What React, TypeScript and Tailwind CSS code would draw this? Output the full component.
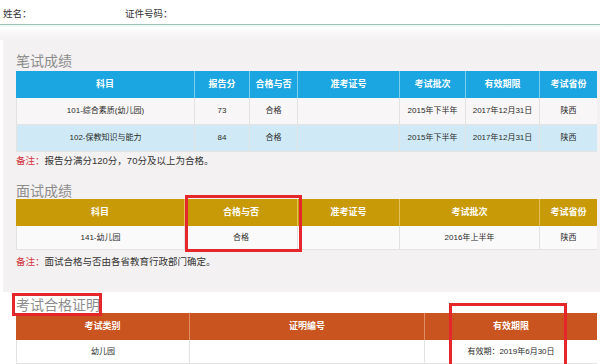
import React from 'react';

const font = "font-['Liberation_Sans','Noto_Sans_CJK_SC',sans-serif]";

interface Table {
  cols: string;
  head: string[];
  rows: string[][];
  headBg: string;
  headLine: string;
  rowBgs: string[];
}

const written: Table = {
  cols: 'grid-cols-[179px_55px_48px_102px_66px_74px_57px]',
  head: ['科目', '报告分', '合格与否', '准考证号', '考试批次', '有效期限', '考试省份'],
  rows: [
    ['101-综合素质(幼儿园)', '73', '合格', '', '2015年下半年', '2017年12月31日', '陕西'],
    ['102-保教知识与能力', '84', '合格', '', '2015年下半年', '2017年12月31日', '陕西'],
  ],
  headBg: 'bg-[#1ba6e1]',
  headLine: 'border-[#7fcdee]',
  rowBgs: ['bg-[#f8f6f6]', 'bg-[#cfeaf6]'],
};

const interview: Table = {
  cols: 'grid-cols-[169px_113px_102px_140px_57px]',
  head: ['科目', '合格与否', '准考证号', '考试批次', '考试省份'],
  rows: [['141-幼儿园', '合格', '', '2016年上半年', '陕西']],
  headBg: 'bg-[#c99a08]',
  headLine: 'border-[#e3c25a]',
  rowBgs: ['bg-[#fbfafa]'],
};

const certificate: Table = {
  cols: 'grid-cols-[174px_235px_172px]',
  head: ['考试类别', '证明编号', '有效期限'],
  rows: [['幼儿园', '', '有效期：2019年6月30日']],
  headBg: 'bg-[#c9541f]',
  headLine: 'border-[#e08e66]',
  rowBgs: ['bg-white'],
};

const ScoreTable: React.FC<{ t: Table; headH: string; rowH: string }> = ({ t, headH, rowH }) => (
  <div className="w-[581px]">
    <div className={`grid ${t.cols} ${t.headBg} ${headH}`}>
      {t.head.map((h, i) => (
        <div
          key={h}
          className={`flex items-center justify-center text-[9px] font-bold text-white ${
            i < t.head.length - 1 ? `border-r ${t.headLine}` : ''
          }`}
        >
          {h}
        </div>
      ))}
    </div>
    {t.rows.map((r, ri) => (
      <div key={ri} className={`grid ${t.cols} ${t.rowBgs[ri]} ${rowH} border-b border-[#e4e4e4]`}>
        {r.map((c, i) => (
          <div
            key={i}
            className={`flex items-center justify-center text-[8px] text-[#2a2a2a] ${
              i < r.length - 1 ? 'border-r border-[#e2e2e2]' : ''
            } ${i === 0 ? 'border-l border-[#e2e2e2]' : ''}`}
          >
            {c}
          </div>
        ))}
      </div>
    ))}
  </div>
);

const Note: React.FC<{ text: string; h: string }> = ({ text, h }) => (
  <div className={`flex items-center text-[9.5px] text-[#333] ${h}`}>
    <span className="text-[#d2323c]">备注：</span>
    {text}
  </div>
);

const Title: React.FC<{ text: string; h: string }> = ({ text, h }) => (
  <div className={`flex items-end ${h}`}>
    <span className="text-[14px] leading-[16px] text-[#8c8c8c]">{text}</span>
  </div>
);

export default function App() {
  return (
    <div className={`relative w-[600px] h-[364px] overflow-hidden bg-white ${font}`}>
      <div className="flex h-[25px] items-center border-b border-[#9dc2b7] pl-[3px] pt-[5px] text-[9.5px] text-[#333]">
        <span className="w-[122px]">姓名：</span>
        <span>证件号码：</span>
      </div>
      <div className="h-[2px] bg-[#eef9f6]" />
      <div className="h-[13px] bg-gradient-to-b from-white to-[#f3f1f1]" />

      <div className="ml-[3px] bg-[#f3f1f1] pl-[13px] pb-[18px]">
        <Title text="笔试成绩" h="h-[31px] pb-[2px]" />
        <ScoreTable t={written} headH="h-[27px]" rowH="h-[27px]" />
        <Note text="报告分满分120分，70分及以上为合格。" h="h-[18px]" />
        <Title text="面试成绩" h="h-[29px]" />
        <ScoreTable t={interview} headH="h-[27px]" rowH="h-[24px]" />
        <Note text="面试合格与否由各省教育行政部门确定。" h="h-[24px]" />
      </div>

      <div className="ml-[3px] bg-white pl-[13px]">
        <Title text="考试合格证明" h="h-[21px]" />
        <ScoreTable t={certificate} headH="h-[27px]" rowH="h-[24px]" />
      </div>

      <div className="absolute left-[185px] top-[195px] h-[57px] w-[117px] border-[3px] border-[#e5262b]" />
      <div className="absolute left-[12px] top-[293px] h-[23px] w-[90px] border-[3px] border-[#e5262b]" />
      <div className="absolute left-[449px] top-[303px] h-[70px] w-[118px] border-[3px] border-[#e5262b]" />
    </div>
  );
}
